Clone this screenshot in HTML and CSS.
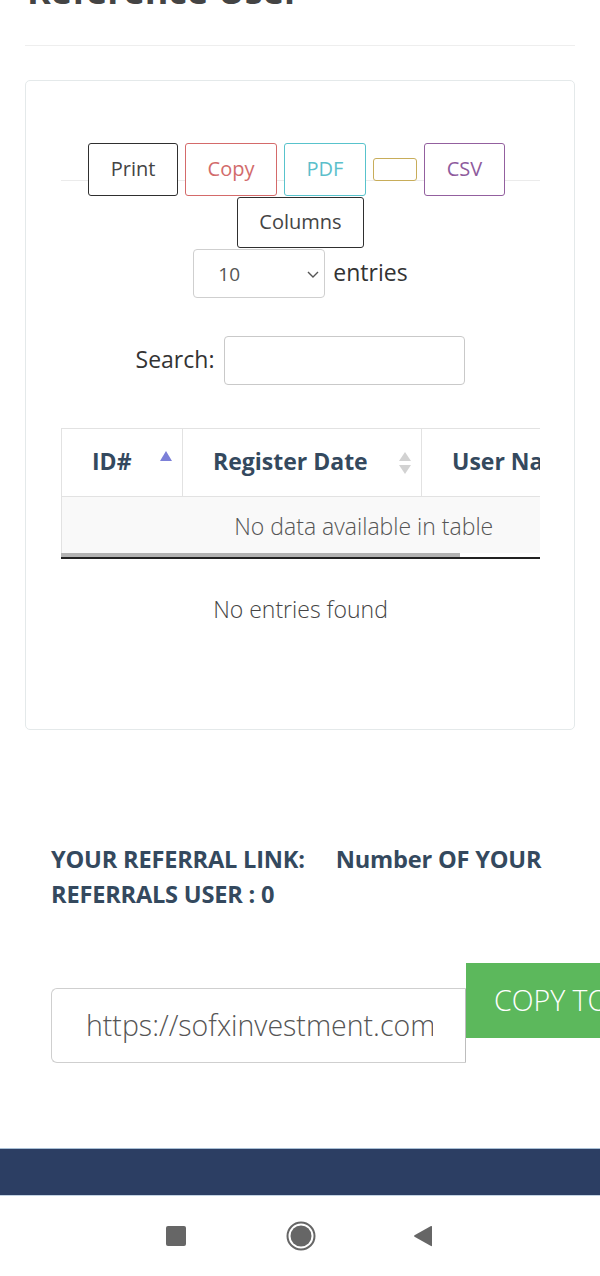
FILE: index.html
```html
<!DOCTYPE html>
<html>
<head>
<meta charset="utf-8">
<link rel="stylesheet" href="styles.css">
</head>
<body>
<div class="page">
  <h2 class="title">Reference User</h2>
  <hr class="rule">
  <div class="card">
    <div class="inner">
      <div class="dt-buttons">
        <button class="btn btn-print">Print</button>
        <button class="btn btn-copy">Copy</button>
        <button class="btn btn-pdf">PDF</button>
        <button class="btn btn-empty"></button>
        <button class="btn btn-csv">CSV</button>
      </div>
      <div class="cols-row"><button class="btn btn-cols">Columns</button></div>
      <div class="len-row">
        <div class="select"><span>10</span>
          <svg width="14" height="10" viewBox="0 0 14 10"><path d="M2 3 L7 8 L12 3" fill="none" stroke="#555" stroke-width="1.4"/></svg>
        </div>
        <span class="len-label">entries</span>
      </div>
      <div class="search-row">
        <label class="search-label">Search:</label>
        <div class="search-input"></div>
      </div>
      <div class="table-wrap">
        <table class="dt">
          <thead>
            <tr>
              <th class="c1"><span>ID#</span>
                <svg class="sort" width="14" height="12" viewBox="0 0 14 12"><path d="M1 11 L7 1 L13 11 Z" fill="#7c80d8"/></svg>
              </th>
              <th class="c2"><span>Register Date</span>
                <svg class="sort2" width="14" height="24" viewBox="0 0 14 24"><path d="M1 10 L7 1 L13 10 Z" fill="#d2d2d2"/><path d="M1 14 L7 23 L13 14 Z" fill="#d2d2d2"/></svg>
              </th>
              <th class="c3"><span>User Name</span></th>
            </tr>
          </thead>
          <tbody>
            <tr><td colspan="3">No data available in table</td></tr>
          </tbody>
        </table>
        <div class="scroll"><div class="thumb"></div></div>
      </div>
      <p class="info">No entries found</p>
    </div>
  </div>
  <div class="ref-text">
    <span class="ref-link">YOUR REFERRAL LINK:</span>
    <span>Number OF YOUR REFERRALS USER : 0</span>
  </div>
  <div class="copy-group">
    <div class="link-input"><span class="link-text">https://sofxinvestment.com/register?ref=user</span></div>
    <button class="copy-btn">COPY TO CLIPBOARD</button>
  </div>
</div>
<div class="footer"></div>
<div class="navbar">
  <svg width="20" height="20" viewBox="0 0 20 20"><rect x="0" y="0" width="20" height="20" rx="2" fill="#666"/></svg>
  <svg width="32" height="32" viewBox="0 0 32 32"><circle cx="16" cy="16" r="13.5" fill="none" stroke="#666" stroke-width="2"/><circle cx="16" cy="16" r="10.5" fill="#666"/></svg>
  <svg width="22" height="22" viewBox="0 0 22 22"><path d="M20 1.5 L20 20.5 Q20 21.5 19 21 L2.5 11.8 Q1.5 11 2.5 10.2 L19 1 Q20 0.6 20 1.5 Z" fill="#666"/></svg>
</div>
</body>
</html>
```

FILE: styles.css
```css
html, body {
  margin: 0;
  padding: 0;
  background: #fff;
  overflow-x: hidden;
}
body {
  width: 600px;
  font-family: "Open Sans", "DejaVu Sans", sans-serif;
  color: #333;
}
.page {
  padding: 0 25px;
}
.title {
  margin: -29px 0 0 2px;
  font-size: 36px;
  line-height: 40px;
  font-weight: 700;
  color: #444;
  white-space: nowrap;
}
.rule {
  margin: 34px 0 0;
  border: 0;
  border-top: 1px solid #eeeeee;
  height: 0;
}
.card {
  margin-top: 34px;
  border: 1px solid #e4e9ea;
  border-radius: 5px;
  padding: 62px 34px 0 35px;
  box-sizing: content-box;
  height: 586px;
}
.inner {
  width: 479px;
}
.dt-buttons {
  position: relative;
  display: flex;
  justify-content: center;
  align-items: center;
  gap: 7px;
  padding-right: 8px;
  height: 53px;
}
.dt-buttons::before {
  content: "";
  position: absolute;
  left: 0;
  right: 0;
  top: 37px;
  border-top: 1px solid #ebebeb;
}
.btn {
  position: relative;
  font-family: "Open Sans", sans-serif;
  font-size: 20px;
  background: #fff;
  border: 1px solid #333;
  border-radius: 3px;
  height: 53px;
  padding: 0 0 2px;
  color: #444;
}
.btn-print { width: 90px; border-color: #2f2f2f; color: #444; }
.btn-copy { width: 92px; border-color: #d46a6a; color: #d26b6b; }
.btn-pdf { width: 82px; border-color: #58c3cc; color: #5bbfcb; }
.btn-empty { width: 44px; height: 23px; border-color: #c8ad5a; padding: 0; }
.btn-csv { width: 81px; border-color: #93609f; color: #8e5b9d; }
.cols-row {
  display: flex;
  justify-content: center;
  margin-top: 1px;
}
.btn-cols {
  width: 127px;
  height: 51px;
  border-color: #2f2f2f;
  color: #444;
}
.len-row {
  display: flex;
  justify-content: center;
  align-items: center;
  gap: 8px;
  margin-top: 1px;
}
.select {
  width: 132px;
  height: 49px;
  box-sizing: border-box;
  border: 1px solid #cfcfcf;
  border-radius: 4px;
  display: flex;
  align-items: center;
  justify-content: space-between;
  padding: 0 4px 0 24px;
  font-size: 19px;
  color: #555;
}
.len-label {
  font-size: 23px;
  color: #333;
  margin-top: -4px;
}
.search-row {
  display: flex;
  justify-content: center;
  align-items: center;
  gap: 10px;
  margin-top: 38px;
}
.search-label {
  font-size: 23px;
  color: #333;
  margin-top: -4px;
}
.search-input {
  width: 241px;
  height: 49px;
  box-sizing: border-box;
  border: 1px solid #c9c9c9;
  border-radius: 4px;
}
.table-wrap {
  margin-top: 43px;
  width: 479px;
  overflow: hidden;
}
.dt {
  border-collapse: collapse;
  width: 604px;
  table-layout: fixed;
}
.dt th {
  position: relative;
  height: 68px;
  box-sizing: border-box;
  border-top: 1px solid #e2e2e2;
  border-left: 1px solid #e2e2e2;
  border-bottom: 1px solid #e2e2e2;
  text-align: left;
  padding: 0 0 3px 30px;
  font-size: 23px;
  font-weight: 700;
  color: #34495e;
  white-space: nowrap;
}
.dt th.c1 { width: 121px; }
.dt th.c2 { width: 239px; }
.dt th.c3 { width: 244px; }
.sort {
  position: absolute;
  right: 9px;
  top: 21px;
}
.sort2 {
  position: absolute;
  right: 9px;
  top: 22px;
}
.dt td {
  height: 56px;
  background: #f9f9f9;
  border-left: 1px solid #e2e2e2;
  text-align: center;
  font-size: 23px;
  font-weight: 300;
  color: #555;
  padding: 3px 0 0;
  box-sizing: border-box;
}
.scroll {
  height: 4px;
  border-bottom: 2px solid #222;
}
.thumb {
  width: 399px;
  height: 4px;
  background: #b3b3b3;
}
.info {
  margin: 35px 0 0;
  text-align: center;
  font-size: 23px;
  line-height: 30px;
  font-weight: 300;
  color: #444;
}
.ref-text {
  margin: 112px 0 0 26px;
  width: 500px;
  font-size: 23.6px;
  line-height: 35px;
  font-weight: 700;
  color: #34495e;
  letter-spacing: -0.2px;
}
.ref-link {
  margin-right: 25px;
}
.copy-group {
  display: flex;
  align-items: flex-start;
  margin: 51px 0 0 26px;
}
.link-input {
  width: 415px;
  height: 75px;
  flex: none;
  box-sizing: border-box;
  border: 1px solid #cfcfcf;
  border-right: 1px solid #bdbdbd;
  border-radius: 6px 0 0 6px;
  margin-top: 25px;
  padding: 0 0 0 34px;
  font-size: 28.5px;
  line-height: 73px;
  font-weight: 300;
  color: #555;
  white-space: nowrap;
  overflow: hidden;
}
.link-text {
  display: inline-block;
  width: 347px;
  overflow: hidden;
  vertical-align: top;
}
.copy-btn {
  flex: none;
  height: 75px;
  background: #5cb85c;
  border: 0;
  border-radius: 0;
  padding: 0 28px 2px;
  font-family: "Open Sans", sans-serif;
  font-size: 28.5px;
  font-weight: 300;
  color: #fff;
  white-space: nowrap;
}
.footer {
  margin-top: 85px;
  height: 46px;
  background: #2c3e63;
  border-top: 1px solid #a9c0d6;
  border-bottom: 1px solid #c3d3e3;
}
.navbar {
  height: 80px;
  display: flex;
  align-items: center;
  justify-content: center;
}
.navbar svg:nth-child(1) { margin-right: 99px; }
.navbar svg:nth-child(2) { margin-right: 95px; }
```
